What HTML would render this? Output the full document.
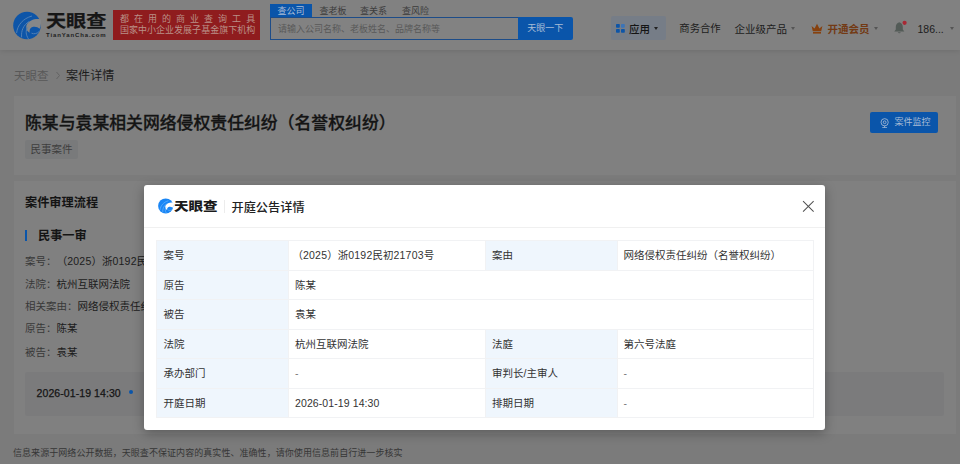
<!DOCTYPE html>
<html lang="zh-CN">
<head>
<meta charset="utf-8">
<title>案件详情 - 天眼查</title>
<style>
*{box-sizing:border-box;margin:0;padding:0}
html,body{width:960px;height:464px;overflow:hidden}
body{font-family:"Liberation Sans","Noto Sans CJK SC",sans-serif;background:#7b7b7b;color:#191919;font-size:10.5px;position:relative}
.abs{position:absolute;white-space:nowrap}
/* header (dimmed colours painted directly) */
#hdr{position:absolute;left:0;top:0;width:960px;height:49.5px;background:#818181;box-shadow:0 1px 5px rgba(0,0,0,.10)}
#logo-t{left:45.5px;top:9.3px;font-size:17.5px;font-weight:700;-webkit-text-stroke:.25px #161616;color:#161616;line-height:24px;transform:scaleX(1.15);transform-origin:0 50%}
#logo-s{left:46px;top:31.3px;font-size:6px;font-weight:bold;color:#1e1e1e;letter-spacing:.88px;line-height:8px}
#banner{left:112.7px;top:9.8px;width:147.8px;height:30px;background:#8f1c1e;color:#ba9088;font-size:9px;line-height:11.3px;padding:4px 0 0 7.2px}
#banner div{white-space:nowrap}
#banner .l1{letter-spacing:5.03px}
#banner .l2{letter-spacing:.03px}
.tab{font-size:9px;line-height:13px;color:#3c3c3c;top:5.1px}
#tab1{left:270px;top:4px;width:42px;height:13.5px;background:#0a55aa;color:#a9bdd6;text-align:center;font-size:9px;line-height:15.2px}
#sinput{left:270px;top:17.4px;width:249px;height:22.2px;border:1px solid #1d4c88;background:#828282;color:#595959;font-size:9px;line-height:23.6px;padding-left:7px}
#sbtn{left:518px;top:17.4px;width:54.5px;height:22.2px;border-radius:0 2px 2px 0;background:#0a55aa;color:#a9bdd6;font-size:9px;line-height:22px;text-align:center}
.nav{font-size:10.5px;line-height:14px;top:21.5px;color:#1c1c1c}
#appbtn{left:610.5px;top:16.2px;width:55.5px;height:23.4px;background:#767d87;border-radius:2px}
.caret{width:0;height:0;border-left:2.5px solid transparent;border-right:2.5px solid transparent;border-top:3px solid #555;top:27px}
/* page */
.crumb{font-size:12px;line-height:16px;top:67.6px}
.card{position:absolute;left:14px;width:942px;background:#808080}
#title{left:25px;top:111.9px;font-size:16.85px;font-weight:500;-webkit-text-stroke:.3px #141414;line-height:24px;color:#141414}
#tag{left:25px;top:139.5px;width:53px;height:19.5px;background:#797a7b;border-radius:2px;font-size:10.5px;line-height:18.6px;text-align:center;color:#3e3e3e}
#monitor{left:870px;top:112px;width:68.3px;height:21px;background:#0a55aa;border-radius:2px;color:#a9bdd6;font-size:9px;line-height:21px;padding-left:24.5px}
.h2{font-size:12.2px;font-weight:bold;line-height:16px;color:#141414}
.li{font-size:10.5px;line-height:14px;left:25px;color:#1c1c1c}
.li span{color:#383838}
i{font-style:normal;letter-spacing:.22px}
#tl{left:24.5px;top:372px;width:919.5px;height:44px;background:#7b7b7c;border-radius:2px}
#foot{left:13px;top:447.2px;letter-spacing:.06px;font-size:9px;line-height:13px;color:#363636}
/* modal */
#modal{position:absolute;left:144px;top:185px;width:681px;height:245px;background:#fff;border-radius:3px;box-shadow:0 3px 12px rgba(0,0,0,.30)}
#mhead{position:absolute;left:0;top:0;width:100%;height:42.5px;border-bottom:1px solid #f0f0f0}
#mlogo-t{left:30.1px;top:11.5px;font-size:12.2px;font-weight:900;line-height:20px;color:#1a1a1a;transform:scaleX(1.19);transform-origin:0 50%}
#mtitle{left:87.5px;top:14.6px;font-size:12.2px;font-weight:500;line-height:16px;color:#222}
#msep{left:79.5px;top:15px;width:1px;height:13px;background:#ececec}
table{position:absolute;left:12px;top:55px;width:657px;border-collapse:collapse;table-layout:fixed;font-size:10.5px;color:#333}
td{height:29.5px;border:1px solid #f1f2f4;padding:0 6px;vertical-align:middle;white-space:nowrap;line-height:14px}
td.k{background:#eff6fd;width:132px;padding-left:6.5px}
td.v{width:196.5px}
</style>
</head>
<body>
<div id="hdr">
  <svg class="abs" style="left:13px;top:11px" width="28" height="29" viewBox="0 0 28 29">
    <circle cx="14" cy="14.5" r="13.8" fill="#0d55a8"/>
    <path d="M28.5 8.6 C23 7 16.5 8.8 13.8 13.5 C12.5 16.6 13.5 20.2 16.8 21.8 C16 18.8 17.4 16.4 20.4 15.8 C22.8 15.4 25 16.2 26.6 17.8 C27.4 16.4 27.8 14.8 27.9 13.2 Z" fill="#858789"/>
    <path d="M3.6 22 C4.5 14 10 7.5 19 5" stroke="#4f7fb5" stroke-width="1" fill="none"/>
    <path d="M8.6 26.4 C8 19.5 10.5 14 16 10.6" stroke="#4f7fb5" stroke-width="1" fill="none"/>
    <path d="M15.5 28 C12.6 23.5 12.6 19.5 14.6 16.5" stroke="#4f7fb5" stroke-width="1" fill="none"/>
    <path d="M18.5 22.2 C21 23.4 24.5 22.6 26.4 20.2" stroke="#4f7fb5" stroke-width="1" fill="none"/>
  </svg>
  <div id="logo-t" class="abs">天眼查</div>
  <div id="logo-s" class="abs">TianYanCha.com</div>
  <div id="banner" class="abs"><div class="l1">都在用的商业查询工具</div><div class="l2">国家中小企业发展子基金旗下机构</div></div>
  <div id="tab1" class="abs">查公司</div>
  <div class="abs tab" style="left:319.5px">查老板</div>
  <div class="abs tab" style="left:360px">查关系</div>
  <div class="abs tab" style="left:402px">查风险</div>
  <div id="sinput" class="abs">请输入公司名称、老板姓名、品牌名称等</div>
  <div id="sbtn" class="abs">天眼一下</div>
  <div id="appbtn" class="abs"></div>
  <svg class="abs" style="left:616px;top:24px" width="9" height="9" viewBox="0 0 9 9"><rect x="0" y="0" width="3.8" height="3.8" rx=".8" fill="#0d55a8"/><rect x="5" y="0" width="3.8" height="3.8" rx=".8" fill="#3b74b8"/><rect x="0" y="5" width="3.8" height="3.8" rx=".8" fill="#0d55a8"/><rect x="5" y="5" width="3.8" height="3.8" rx=".8" fill="#0d55a8"/></svg>
  <div class="abs nav" style="left:629px;color:#141414;font-weight:500">应用</div>
  <div class="abs caret" style="left:654px;border-top-color:#222"></div>
  <div class="abs nav" style="left:679.3px;font-size:10.35px">商务合作</div>
  <div class="abs nav" style="left:734.6px">企业级产品</div>
  <div class="abs caret" style="left:791px;border-top-color:#555"></div>
  <svg class="abs" style="left:810.5px;top:22.5px" width="12" height="11" viewBox="0 0 12 11"><path d="M.6 3 L3.6 5.4 L6 .8 L8.4 5.4 L11.4 3 L10.2 8.2 L1.8 8.2Z" fill="#87410e"/><rect x="2" y="9" width="8" height="1.6" fill="#87410e"/></svg>
  <div class="abs nav" style="left:827.5px;color:#733a14;font-weight:bold">开通会员</div>
  <div class="abs caret" style="left:874px;border-top-color:#555"></div>
  <svg class="abs" style="left:892.9px;top:18.8px" width="16" height="17" viewBox="0 0 16 17"><path d="M6.3 3.2 C3.9 3.8 2.8 5.8 2.8 7.9 L2.8 10.4 L1.3 12.4 L11.3 12.4 L9.8 10.4 L9.8 7.9 C9.8 5.8 8.7 3.8 6.3 3.2Z" fill="#535b57"/><path d="M4.8 13.2 a1.6 1.6 0 0 0 3 0Z" fill="#535b57"/><circle cx="11.6" cy="3.8" r="2.1" fill="#a82834"/></svg>
  <div class="abs nav" style="left:917.5px">186...</div>
  <div class="abs caret" style="left:949.5px;border-top-color:#555"></div>
</div>

<div class="abs crumb" style="left:14px;font-size:11.5px;color:#585858">天眼查</div>
<svg class="abs" style="left:54.6px;top:71.4px" width="6" height="9" viewBox="0 0 6 9"><path d="M1.5 1 L4.5 4.5 L1.5 8" stroke="#636363" stroke-width="1" fill="none"/></svg>
<div class="abs crumb" style="left:66px;font-size:12.1px;color:#1c1c1c">案件详情</div>

<div class="card" style="top:96px;height:78.5px"></div>
<div id="title" class="abs">陈某与袁某相关网络侵权责任纠纷（名誉权纠纷）</div>
<div id="tag" class="abs">民事案件</div>
<div id="monitor" class="abs">案件监控</div>
<svg class="abs" style="left:879.6px;top:117.6px" width="9.3" height="10.2" viewBox="0 0 10 11"><circle cx="5" cy="4.6" r="3.9" stroke="#a9bdd6" stroke-width=".9" fill="none"/><circle cx="5" cy="4.6" r="1.5" stroke="#a9bdd6" stroke-width=".9" fill="none"/><path d="M2.4 10.4 L7.6 10.4 M5 8.5 L5 10.4" stroke="#a9bdd6" stroke-width=".9"/></svg>

<div class="card" style="top:181px;height:252.5px"></div>
<div class="abs h2" style="left:25px;top:194.7px">案件审理流程</div>
<div class="abs" style="left:24.8px;top:230.4px;width:2.2px;height:10.6px;background:#0a55aa"></div>
<div class="abs h2" style="left:38px;top:227.6px">民事一审</div>
<div class="abs li" style="top:254px"><span style="margin-right:5.5px">案号：</span>（<i>2025</i>）浙<i>0192</i>民初<i>21703</i>号</div>
<div class="abs li" style="top:277px"><span>法院：</span>杭州互联网法院</div>
<div class="abs li" style="top:299px"><span>相关案由：</span>网络侵权责任纠纷（名誉权纠纷）</div>
<div class="abs li" style="top:321px"><span>原告：</span>陈某</div>
<div class="abs li" style="top:345px"><span>被告：</span>袁某</div>
<div id="tl" class="abs"></div>
<div class="abs" style="left:36.6px;top:385.6px;font-size:10.5px;line-height:14px;color:#141414;-webkit-text-stroke:.25px #141414"><i style="letter-spacing:.08px">2026-01-19 14:30</i></div>
<div class="abs" style="left:128.8px;top:389.8px;width:4.6px;height:4.6px;border-radius:50%;background:#0a55aa"></div>
<div id="foot" class="abs">信息来源于网络公开数据，天眼查不保证内容的真实性、准确性，请你使用信息前自行进一步核实</div>

<div id="modal">
  <div id="mhead">
    <svg class="abs" style="left:14.3px;top:13.4px" width="15.4" height="15.95" viewBox="0 0 28 29">
    <circle cx="14" cy="14.5" r="13.8" fill="#1a86f5"/>
    <path d="M28.5 8.6 C23 7 16.5 8.8 13.8 13.5 C12.5 16.6 13.5 20.2 16.8 21.8 C16 18.8 17.4 16.4 20.4 15.8 C22.8 15.4 25 16.2 26.6 17.8 C27.4 16.4 27.8 14.8 27.9 13.2 Z" fill="#ffffff"/>
    <path d="M3.6 22 C4.5 14 10 7.5 19 5" stroke="#7cc0ff" stroke-width="1" fill="none"/>
    <path d="M8.6 26.4 C8 19.5 10.5 14 16 10.6" stroke="#7cc0ff" stroke-width="1" fill="none"/>
    <path d="M15.5 28 C12.6 23.5 12.6 19.5 14.6 16.5" stroke="#7cc0ff" stroke-width="1" fill="none"/>
    <path d="M18.5 22.2 C21 23.4 24.5 22.6 26.4 20.2" stroke="#7cc0ff" stroke-width="1" fill="none"/>
  </svg>
    <div id="mlogo-t" class="abs">天眼查</div>
    <div id="msep" class="abs"></div>
    <div id="mtitle" class="abs">开庭公告详情</div>
    <svg class="abs" style="left:658.45px;top:14.65px" width="12.7" height="12.7" viewBox="0 0 12 12"><path d="M1 1 L11 11 M11 1 L1 11" stroke="#505050" stroke-width=".95" fill="none"/></svg>
  </div>
  <table>
    <tr><td class="k">案号</td><td class="v"><b style="font-weight:normal;margin-left:-2.5px"></b>（<i>2025</i>）浙<i>0192</i>民初<i>21703</i>号</td><td class="k">案由</td><td class="v">网络侵权责任纠纷（名誉权纠纷）</td></tr>
    <tr><td class="k">原告</td><td class="v" colspan="3">陈某</td></tr>
    <tr><td class="k">被告</td><td class="v" colspan="3">袁某</td></tr>
    <tr><td class="k">法院</td><td class="v">杭州互联网法院</td><td class="k">法庭</td><td class="v">第六号法庭</td></tr>
    <tr><td class="k">承办部门</td><td class="v" style="color:#777">-</td><td class="k">审判长/主审人</td><td class="v" style="color:#777">-</td></tr>
    <tr><td class="k">开庭日期</td><td class="v"><i style="letter-spacing:.1px">2026-01-19 14:30</i></td><td class="k">排期日期</td><td class="v" style="color:#777">-</td></tr>
  </table>
</div>
</body>
</html>
